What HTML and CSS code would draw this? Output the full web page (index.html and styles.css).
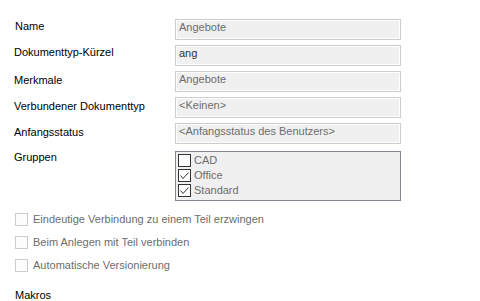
FILE: index.html
```html
<!DOCTYPE html>
<html lang="de">

<head>
    <meta charset="UTF-8">
    <title>Dokumenttyp</title>
    <link rel="stylesheet" href="styles.css">
</head>

<body>

    <div class="form">
        <div class="fields">
            <div class="field">
                <label class="field-label label-high name-label">Name</label>
                <div class="textbox">Angebote</div>
            </div>
            <div class="field">
                <label class="field-label label-high">Dokumenttyp-Kürzel</label>
                <div class="textbox textbox-value">ang</div>
            </div>
            <div class="field">
                <label class="field-label">Merkmale</label>
                <div class="textbox">Angebote</div>
            </div>
            <div class="field">
                <label class="field-label">Verbundener Dokumenttyp</label>
                <div class="textbox">&lt;Keinen&gt;</div>
            </div>
            <div class="field">
                <label class="field-label">Anfangsstatus</label>
                <div class="textbox">&lt;Anfangsstatus des Benutzers&gt;</div>
            </div>
        </div>

        <div class="field groups">
            <label class="field-label groups-label">Gruppen</label>
            <ul class="checklist">
                <li><span class="check"></span>CAD</li>
                <li>
                    <span class="check">
                        <svg width="11" height="11" viewBox="0 0 11 11"><polyline points="1.5,5.5 4,8.5 9.5,2.5" fill="none" stroke="#333" stroke-width="1"/></svg>
                    </span>Office
                </li>
                <li>
                    <span class="check">
                        <svg width="11" height="11" viewBox="0 0 11 11"><polyline points="1.5,5.5 4,8.5 9.5,2.5" fill="none" stroke="#333" stroke-width="1"/></svg>
                    </span>Standard
                </li>
            </ul>
        </div>

        <div class="options">
            <label class="option"><span class="option-box"></span>Eindeutige Verbindung zu einem Teil erzwingen</label>
            <label class="option"><span class="option-box"></span>Beim Anlegen mit Teil verbinden</label>
            <label class="option"><span class="option-box"></span>Automatische Versionierung</label>
        </div>

        <h3 class="section-label">Makros</h3>
    </div>

</body>

</html>
```

FILE: styles.css
```css
body {
    font-family: 'Liberation Sans', Arial, sans-serif;
    font-size: 11px;
    line-height: 13px;
    color: #000;
    background-color: #fff;
    margin: 0;
}

.form {
    padding: 19px 0 0 14px;
}

.fields {
    display: flex;
    flex-direction: column;
    gap: 5px;
}

.field {
    display: grid;
    grid-template-columns: 161px 226px;
}

.field-label {
    padding-top: 3px;
}

.label-high {
    padding-top: 1px;
}

.name-label {
    padding-left: 1px;
}

.textbox {
    box-sizing: border-box;
    height: 21px;
    padding: 1px 3px 0;
    border: 1px solid #cccccc;
    box-shadow: inset 0 0 0 1px #fff;
    background-color: #f0f0f0;
    color: #6d6d6d;
    white-space: nowrap;
    overflow: hidden;
}

.textbox-value {
    color: #333;
}

.groups {
    margin-top: 7px;
}

.groups-label {
    padding-top: 0;
}

.checklist {
    box-sizing: border-box;
    height: 50px;
    margin: 0;
    padding: 1px 2px;
    list-style: none;
    border: 1px solid #828790;
    background-color: #f0f0f0;
    color: #6d6d6d;
}

.checklist li {
    display: flex;
    align-items: center;
    gap: 3px;
    height: 15px;
}

.check {
    box-sizing: border-box;
    display: flex;
    width: 13px;
    height: 13px;
    border: 1px solid #333;
    background-color: #fff;
}

.options {
    margin-top: 12px;
    padding-left: 1px;
    display: flex;
    flex-direction: column;
    gap: 10px;
}

.option {
    display: flex;
    align-items: center;
    gap: 5px;
    height: 13px;
    color: #6d6d6d;
}

.option-box {
    box-sizing: border-box;
    width: 13px;
    height: 13px;
    border: 1px solid #cccccc;
    background-color: #fcfcfc;
}

.section-label {
    margin: 17px 0 0 1px;
    font-size: 11px;
    font-weight: normal;
}
```
